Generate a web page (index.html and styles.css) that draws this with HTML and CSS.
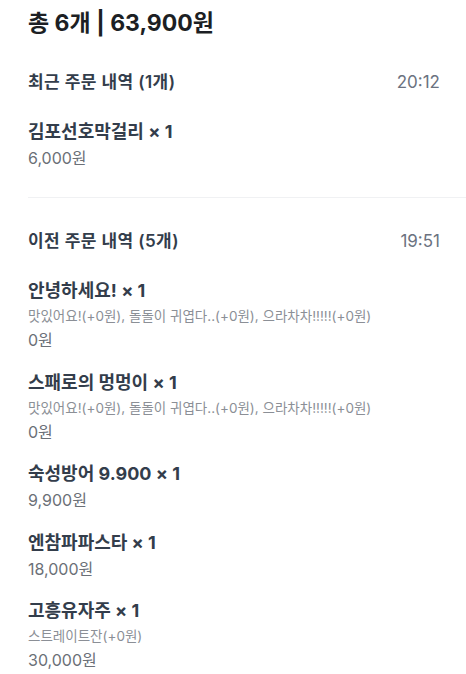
FILE: index.html
```html
<!DOCTYPE html>
<html lang="ko">
<head>
<meta charset="utf-8">
<link rel="stylesheet" href="styles.css">
</head>
<body>
<div class="page">
  <h1 class="total">총 6개 | 63,900원</h1>

  <section class="group">
    <div class="group-head">
      <span class="group-title">최근 주문 내역 (1개)</span>
      <span class="group-time">20:12</span>
    </div>
    <ul class="items">
      <li class="item">
        <div class="item-name">김포선호막걸리 × 1</div>
        <div class="item-price">6,000원</div>
      </li>
    </ul>
  </section>

  <hr class="divider">

  <section class="group">
    <div class="group-head">
      <span class="group-title">이전 주문 내역 (5개)</span>
      <span class="group-time">19:51</span>
    </div>
    <ul class="items">
      <li class="item">
        <div class="item-name">안녕하세요! × 1</div>
        <div class="item-opts">맛있어요!(+0원), 돌돌이 귀엽다..(+0원), 으라차차!!!!!(+0원)</div>
        <div class="item-price">0원</div>
      </li>
      <li class="item">
        <div class="item-name">스패로의 멍멍이 × 1</div>
        <div class="item-opts">맛있어요!(+0원), 돌돌이 귀엽다..(+0원), 으라차차!!!!!(+0원)</div>
        <div class="item-price">0원</div>
      </li>
      <li class="item">
        <div class="item-name">숙성방어 9.900 × 1</div>
        <div class="item-price">9,900원</div>
      </li>
      <li class="item">
        <div class="item-name">엔참파파스타 × 1</div>
        <div class="item-price">18,000원</div>
      </li>
      <li class="item">
        <div class="item-name">고흥유자주 × 1</div>
        <div class="item-opts">스트레이트잔(+0원)</div>
        <div class="item-price">30,000원</div>
      </li>
    </ul>
  </section>
</div>
</body>
</html>
```

FILE: styles.css
```css
* { box-sizing: border-box; }
html, body {
  margin: 0;
  padding: 0;
  background: #ffffff;
}
body {
  font-family: "Inter", "Noto Sans CJK KR", sans-serif;
  color: #333d4b;
}
.page {
  padding: 7px 0 0 28px;
}
.total {
  margin: 0;
  font-size: 23px;
  line-height: 32px;
  font-weight: 700;
  color: #1c1f24;
}
.group {
  padding-right: 26px;
}
.group-head {
  display: flex;
  justify-content: space-between;
  align-items: center;
  height: 24px;
}
.total + .group .group-head {
  margin-top: 31px;
}
.group-title {
  font-size: 17px;
  line-height: 24px;
  font-weight: 600;
  letter-spacing: 0.4px;
  color: #333d4b;
}
.group-time {
  font-size: 17px;
  line-height: 24px;
  font-weight: 400;
  color: #6b7280;
}
.items {
  list-style: none;
  margin: 24px 0 0;
  padding: 0;
  display: flex;
  flex-direction: column;
  gap: 16.5px;
}
.item-name {
  font-size: 18px;
  line-height: 28px;
  font-weight: 700;
  color: #333d4b;
}
.item-opts {
  font-size: 13.5px;
  line-height: 23px;
  color: #8b8f96;
}
.item-price {
  font-size: 16px;
  line-height: 24px;
  color: #6b7077;
}
.divider {
  margin: 27px 0 31px;
  border: 0;
  height: 1px;
  background: #f0f1f3;
}
```
